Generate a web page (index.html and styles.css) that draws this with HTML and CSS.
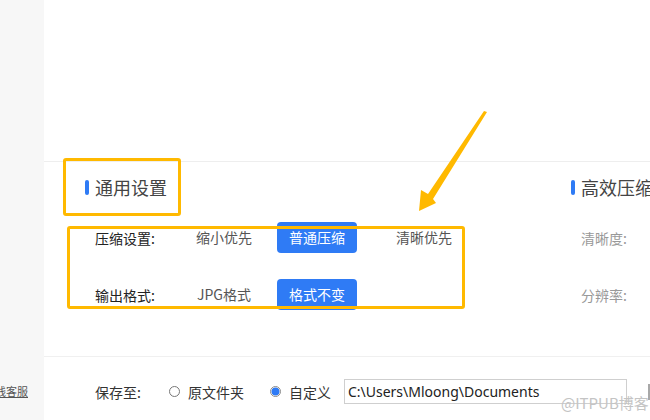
FILE: index.html
```html
<!DOCTYPE html>
<html lang="zh-CN">
<head>
<meta charset="utf-8">
<title>设置</title>
<link rel="stylesheet" href="styles.css">
</head>
<body>
<div class="app">
  <aside class="sidebar">
    <a class="service">在线客服</a>
  </aside>
  <main class="main">
    <div class="top-space"></div>
    <div class="settings">
      <section class="section general">
        <h2 class="section-title"><span class="bar"></span>通用设置</h2>
        <div class="row">
          <span class="label">压缩设置:</span>
          <span class="opt">缩小优先</span>
          <span class="opt active">普通压缩</span>
          <span class="opt far">清晰优先</span>
        </div>
        <div class="row">
          <span class="label">输出格式:</span>
          <span class="opt">JPG格式</span>
          <span class="opt active">格式不变</span>
        </div>
      </section>
      <section class="section efficient">
        <h2 class="section-title"><span class="bar"></span>高效压缩</h2>
        <div class="row">
          <span class="label muted">清晰度:</span>
        </div>
        <div class="row">
          <span class="label muted">分辨率:</span>
        </div>
      </section>
    </div>
    <footer class="footer">
      <span class="save-label">保存至:</span>
      <label class="radio"><span class="dot"></span>原文件夹</label>
      <label class="radio checked"><span class="dot"></span>自定义</label>
      <div class="path">C:\Users\Mloong\Documents</div>
      <div class="browse"></div>
    </footer>
  </main>
</div>
<div class="mark mark-title"></div>
<div class="mark mark-rows"></div>
<svg class="arrow" width="650" height="420" viewBox="0 0 650 420">
  <polygon points="484,111 487,112 433,199 436,203 419,211 421,190 428,194" fill="#ffb900"/>
</svg>
<div class="watermark">@ITPUB博客</div>
</body>
</html>
```

FILE: styles.css
```css
* { box-sizing: border-box; }
html, body { margin: 0; padding: 0; }
body {
  width: 650px;
  height: 420px;
  overflow: hidden;
  position: relative;
  background: #fff;
  font-family: "Noto Sans CJK SC", "Noto Sans", sans-serif;
  font-size: 14px;
  color: #333;
}
.app { display: flex; height: 420px; }
.sidebar {
  width: 44px;
  flex: none;
  background: #f7f7f7;
  display: flex;
  justify-content: flex-end;
  align-items: flex-end;
  padding: 0 16px 22px 0;
  overflow: hidden;
}
.service {
  white-space: nowrap;
  flex: none;
  font-size: 11px;
  line-height: 14px;
  color: #555;
  text-decoration: underline;
}
.main { flex: 1; display: flex; flex-direction: column; min-width: 0; }
.top-space { height: 161px; flex: none; }
.settings {
  height: 195px;
  flex: none;
  border-top: 1px solid #eeeeee;
  display: flex;
}
.section { padding: 13px 0 0 41px; }
.general { width: 486px; flex: none; }
.efficient { flex: 1; white-space: nowrap; overflow: hidden; }
.section-title {
  margin: 0;
  display: flex;
  align-items: center;
  height: 24px;
  font-size: 18px;
  font-weight: normal;
  color: #444;
  white-space: nowrap;
}
.bar {
  width: 4px;
  height: 15px;
  flex: none;
  border-radius: 2px;
  background: #2f7bf5;
  margin-right: 6px;
}
.row {
  display: flex;
  align-items: center;
  height: 31px;
  padding-left: 10px;
  margin-top: 23px;
}
.row + .row { margin-top: 26px; }
.label { width: 89px; flex: none; color: #222; }
.label.muted { color: #999; }
.opt {
  width: 80px;
  flex: none;
  height: 31px;
  line-height: 31px;
  text-align: center;
  border-radius: 4px;
  color: #555;
  margin-right: 13px;
  white-space: nowrap;
}
.opt.active { background: #2f7bf5; color: #fff; }
.opt.far { margin-left: 14px; }
.footer {
  height: 70px;
  flex: none;
  border-top: 1px solid #f0f0f0;
  display: flex;
  align-items: center;
  padding-left: 51px;
  white-space: nowrap;
}
.save-label { color: #333; margin-right: 28px; }
.radio { display: flex; align-items: center; color: #333; margin-right: 26px; }
.radio .dot {
  width: 11px;
  height: 11px;
  flex: none;
  border-radius: 50%;
  border: 1px solid #777;
  margin-right: 8px;
  background: #fff;
}
.radio.checked { margin-right: 13px; }
.radio.checked .dot {
  border-color: #8a8a8a;
  background: radial-gradient(circle, #2f7bf5 0 3.6px, #fff 4.4px);
}
.path {
  width: 283px;
  height: 25px;
  flex: none;
  border: 1px solid #cfcfcf;
  padding-left: 3px;
  line-height: 23px;
  font-family: "Noto Sans", sans-serif;
  font-size: 14px;
  color: #222;
}
.browse {
  width: 30px;
  height: 16px;
  flex: none;
  margin-left: 21px;
  background: #a8a8a8;
}
.mark {
  position: absolute;
  border: 3px solid #ffb900;
  border-radius: 3px;
  pointer-events: none;
}
.mark-title { left: 63px; top: 158px; width: 118px; height: 58px; }
.mark-rows { left: 67px; top: 226px; width: 398px; height: 83px; }
.arrow { position: absolute; left: 0; top: 0; pointer-events: none; }
.watermark {
  position: absolute;
  left: 561px;
  top: 393px;
  font-size: 15px;
  line-height: 20px;
  color: #c4c4c4;
  white-space: nowrap;
}
```
